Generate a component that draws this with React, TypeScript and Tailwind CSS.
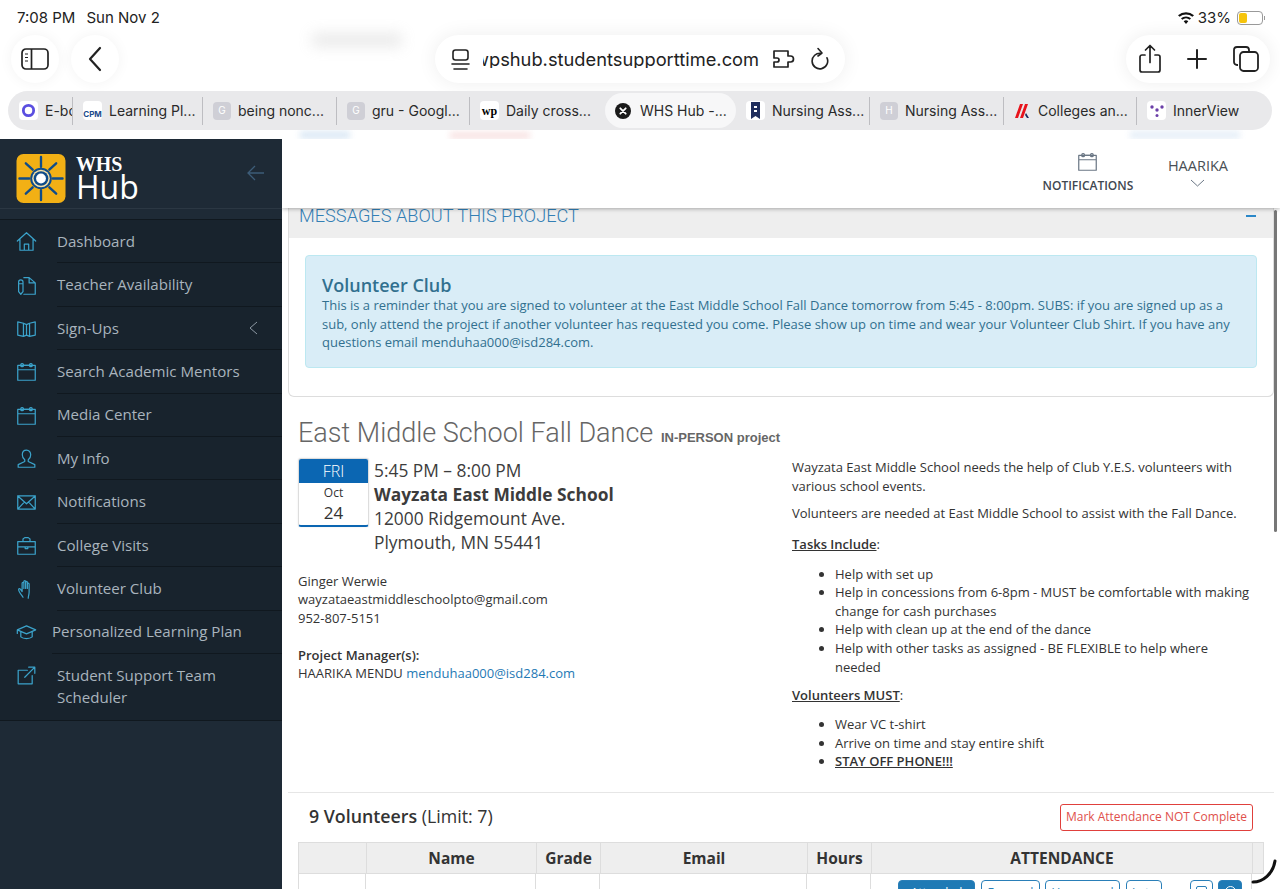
import React from "react";

const I = ({ children, size = 24, sw = 1.4, cls = "" }: { children: React.ReactNode; size?: number; sw?: number; cls?: string }) => (
  <svg width={size} height={size} viewBox="0 0 24 24" fill="none" stroke="currentColor" strokeWidth={sw} strokeLinecap="round" strokeLinejoin="round" className={cls}>{children}</svg>
);

const Cal = () => (<I size={21}><path d="M2 5h20v17H2zM2 10h20M2 5h20" /><rect x="5.5" y="3" width="3" height="3.5" rx="1.2" /><rect x="15.5" y="3" width="3" height="3.5" rx="1.2" /><path d="M8.5 5h7" /></I>);

const navIcons: Record<string, React.ReactNode> = {
  home: <I size={21}><path d="M1.5 11.5 12 2l10.5 9.5M4.5 9.5V22h15V9.5M9.5 22v-7h5v7" /></I>,
  doc: <I size={21}><path d="M9 3h6l7 6v13H9M15 3v6h7" /><path d="M3 8a2.5 2.500 0 0 1 5 0v11l-2.500 3L3 19zM3 10h5" /></I>,
  map: <I size={21}><path d="M2 4.500 8.500 6v15L2 19.500zM8.500 6 12 7.500 15.500 6 22 4.500v15L15.500 21 12 19.500 8.500 21M12 7.500v12M15.500 6v15" /></I>,
  cal: <Cal />,
  user: <I size={21}><path d="M12 2.500c-3 0-4.800 2.300-4.800 5.200 0 2.500 1 4.500 2.800 5.800v2L2.500 19v3h19v-3L14 15.500v-2c1.800-1.300 2.800-3.300 2.800-5.800 0-2.900-1.800-5.200-4.800-5.200Z" /></I>,
  mail: <I size={21}><path d="M2 4.500h20v15H2zM2 4.500l10 9 10-9M2 19.500l7.500-8M22 19.500l-7.500-8" /></I>,
  case: <I size={21}><path d="M2 7.500h20v14.500H2zM2 13.500h20M8 7.500V4.500L10 3h4l2 1.500v3M10.500 13.500v2h3v-2" /></I>,
  hand: <I size={21}><path d="M8 22c-2-3-5-6.500-5-9 0-1 1.300-1.200 2-.2l2 2.700V6c0-1.500 2-1.500 2 0v6-8c0-1.500 2-1.500 2 0v8-7c0-1.500 2-1.500 2 0v7-5c0-1.500 2-1.500 2 0v9c0 3-1 5-1 7" /></I>,
  grad: <I size={21}><path d="M1.500 9 12 4.500 22.500 9 12 13.500zM5.500 11.500V17c3 2.500 10 2.500 13 0v-5.500M1.500 9v4" /></I>,
  ext: <I size={21}><path d="M13 6H2.500v15.500h16V12M10 14 21.500 2.500M14.500 2.500h7v7" /></I>,
};

const nav: [string, string][] = [
  ["Dashboard", "home"],
  ["Teacher Availability", "doc"],
  ["Sign-Ups", "map"],
  ["Search Academic Mentors", "cal"],
  ["Media Center", "cal"],
  ["My Info", "user"],
  ["Notifications", "mail"],
  ["College Visits", "case"],
  ["Volunteer Club", "hand"],
];

const Fav = ({ f, plain }: { f: React.ReactNode; plain?: boolean }) =>
  typeof f === "string" ? (
    <span className="w-[18px] h-[18px] rounded-[4px] bg-[#cfcfd6] text-white text-[10px] flex items-center justify-center shrink-0">{f}</span>
  ) : (
    <span className={`${plain ? "w-[17px]" : "w-[19px] bg-white"} h-[19px] rounded-[4px] flex items-center justify-center shrink-0 overflow-hidden`}>{f}</span>
  );

const Tab = ({ f, t, w, last, plain }: { f: React.ReactNode; t: string; w: string; last?: boolean; plain?: boolean }) => (
  <div className={`${w} h-[28px] flex items-center gap-[7px] pl-[10px] overflow-hidden shrink-0 ${last ? "" : "border-r border-[#bdbdc1]"}`}>
    <Fav f={f} plain={plain} />
    <span className="whitespace-nowrap">{t}</span>
  </div>
);

const Chrome = () => (
  <div className="relative h-[139px] shrink-0 bg-white font-['Inter',sans-serif] text-[#222] overflow-hidden">
    <div className="absolute left-[312px] top-[33px] w-[90px] h-[14px] bg-[#bbbbbb] blur-[7px] opacity-30" />
    <div className="absolute left-[300px] top-[131px] w-[50px] h-[8px] bg-[#dce9f5] blur-[3px]" />
    <div className="absolute left-[450px] top-[132px] w-[80px] h-[7px] bg-[#f8e2e2] blur-[3px]" />
    <div className="absolute left-[1130px] top-[131px] w-[110px] h-[8px] bg-[#e6eff8] blur-[3px]" />

    <div className="relative h-[36px] pl-[17px] pr-[17px] flex items-center justify-between text-[15px]">
      <div className="flex gap-[11px]"><span>7:08 PM</span><span>Sun Nov 2</span></div>
      <div className="flex items-center gap-[4px]">
        <svg width="16" height="12" viewBox="0 0 16 12" fill="#111"><path d="M8 12 5.700 9.300a3.500 3.500 0 0 1 4.600 0zM4.300 7.800 3 6.300a7.600 7.600 0 0 1 10 0l-1.300 1.500a5.600 5.600 0 0 0-7.400 0zM1.600 4.800 0 3.200a12 12 0 0 1 16 0l-1.600 1.600a9.800 9.800 0 0 0-12.800 0z" /></svg>
        <span>33%</span>
        <div className="relative ml-[2px] w-[26px] h-[14px] rounded-[4px] border border-[#9a9a9a] p-[1px]">
          <div className="w-[8px] h-full rounded-[2px] bg-[#f6c40c]" />
          <div className="absolute right-[-3px] top-[4px] w-[1.500px] h-[4px] bg-[#9a9a9a]" />
        </div>
      </div>
    </div>

    <div className="relative h-[48px] -mt-[1px] flex items-center pl-[11px] pr-[10px]">
      <div className="flex gap-[12px]">
        <div className="w-[48px] h-[48px] rounded-full bg-white shadow-[0_0_14px_rgba(0,0,0,0.05)] flex items-center justify-center">
          <svg width="28" height="26" viewBox="0 0 28 26" fill="none" stroke="#222" strokeWidth="1.700"><rect x="1" y="3" width="26" height="20" rx="4" /><path d="M10.500 3v20" /><path d="M4 8h3M4 11.500h3M4 15h3" strokeWidth="1.200" /></svg>
        </div>
        <div className="w-[48px] h-[48px] rounded-full bg-white shadow-[0_0_14px_rgba(0,0,0,0.05)] flex items-center justify-center text-[#222]">
          <svg width="16" height="26" viewBox="0 0 16 26" fill="none" stroke="currentColor" strokeWidth="2.200" strokeLinecap="round" strokeLinejoin="round"><path d="M13 2 3 13l10 11" /></svg>
        </div>
      </div>
      <div className="ml-[316px] w-[410px] h-[48px] rounded-full bg-white shadow-[0_0_20px_rgba(0,0,0,0.07)] flex items-center pl-[16px] gap-[13px]">
        <svg width="19" height="26" viewBox="0 0 19 26" fill="none" stroke="#222" strokeWidth="1.600" strokeLinecap="round"><rect x="2" y="4" width="15" height="10" rx="2.500" /><path d="M1 18h17M3 23h13" /></svg>
        <div className="w-[277px] overflow-hidden whitespace-nowrap text-[18.300px] leading-none"><span className="ml-[-9px] inline-block">wpshub.studentsupporttime.com</span></div>
        <div className="flex items-center gap-[14px] -ml-[1px]">
          <svg width="24" height="20" viewBox="0 0 24 20" fill="none" stroke="#222" strokeWidth="1.700" strokeLinejoin="round"><path d="M2 2h14v5h2.500a3 3 0 0 1 0 6H16v5H2v-5h3a2 2 0 0 0 0-4H2z" /></svg>
          <svg width="19" height="24" viewBox="0 0 19 24" fill="none" stroke="#222" strokeWidth="1.600" strokeLinecap="round" strokeLinejoin="round"><path d="M11 6.300a7.800 7.800 0 1 0 6 4.500" /><path d="M8 1.500 12 6l-4 3" /></svg>
        </div>
      </div>
      <div className="ml-auto h-[48px] w-[144px] rounded-full bg-white shadow-[0_0_18px_rgba(0,0,0,0.07)] flex items-center pl-[13px] gap-[26px]">
        <svg width="22" height="30" viewBox="0 0 22 30" fill="none" stroke="#222" strokeWidth="1.700" strokeLinecap="round" strokeLinejoin="round"><path d="M11 18.500V2M6.500 6 11 1.500 15.500 6M6 11H3a2 2 0 0 0-2 2v13a2 2 0 0 0 2 2h16a2 2 0 0 0 2-2V13a2 2 0 0 0-2-2h-3" /></svg>
        <svg width="20" height="20" viewBox="0 0 20 20" stroke="#222" strokeWidth="2" strokeLinecap="round"><path d="M10 1v18M1 10h18" /></svg>
        <svg width="26" height="26" viewBox="0 0 26 26" fill="none" stroke="#222" strokeWidth="1.800"><path d="M5 19H4a3 3 0 0 1-3-3V4a3 3 0 0 1 3-3h9a3 3 0 0 1 3 3v2" /><rect x="7" y="6" width="18" height="19" rx="3.500" /></svg>
      </div>
    </div>

    <div className="relative mt-[8px] ml-[8px] w-[1264px] h-[39px] rounded-full bg-[#e9e9eb] flex items-center pl-[1px] text-[14px] text-[#2a2a2a]">
      <Tab w="w-[64px]" t="E-book" f={<svg width="15" height="15" viewBox="0 0 16 16" fill="none" stroke="#5a4ee0" strokeWidth="3"><circle cx="8" cy="8" r="5.500" /></svg>} />
      <Tab w="w-[130px]" t="Learning Pl..." f={<span className="text-[8px] font-bold leading-none text-[#1c4b8c] pt-1.5">CPM</span>} />
      <Tab w="w-[134px]" t="being nonc..." f="G" />
      <Tab w="w-[133px]" t="gru - Googl..." f="G" />
      <Tab w="w-[135px]" last t="Daily cross..." f={<span className="font-['Liberation_Serif',serif] text-[12px] font-bold text-black">wp</span>} />
      <div className="w-[131px] h-[35px] rounded-full bg-[#f7f7f8] flex items-center pl-[10px] gap-[9px] overflow-hidden shrink-0 whitespace-nowrap">
        <svg width="16" height="16" viewBox="0 0 16 16"><circle cx="8" cy="8" r="8" fill="#1a1a1a" /><path d="M5.300 5.300l5.400 5.400M10.700 5.300l-5.400 5.400" stroke="#fff" strokeWidth="1.800" strokeLinecap="round" /></svg>
        <span>WHS Hub -...</span>
      </div>
      <Tab w="w-[134px]" t="Nursing Ass..." f={<svg width="9" height="17" viewBox="0 0 9 17"><path d="M0 0h9v17L4.500 14 0 17z" fill="#1f2d5c" /><path d="M3 4h3v2H3zM3 8h3v2H3z" fill="#fff" /></svg>} />
      <Tab w="w-[134px]" t="Nursing Ass..." f="H" />
      <Tab w="w-[133px]" plain t="Colleges an..." f={<svg width="16" height="16" viewBox="0 0 16 16"><path d="M5 1h3L3 15H0zM10 1h3L8 15H5z" fill="#e8141c" /><path d="M11 10l3 5h-2l-2-3z" fill="#1f2d5c" /></svg>} />
      <div className="flex items-center gap-[7px] pl-[10px]">
        <Fav f={<svg width="14" height="12" viewBox="0 0 14 12" fill="#6b3fa8"><circle cx="2" cy="2" r="1.700" /><circle cx="12" cy="2" r="1.700" /><circle cx="7" cy="5" r="1.700" /><circle cx="7" cy="10.500" r="1.500" /></svg>} />
        <span>InnerView</span>
      </div>
    </div>
  </div>
);

const Row = ({ label, icon, extra }: { label: string; icon: string; extra?: React.ReactNode }) => (
  <div className="flex items-center h-[43.400px] pl-[16px]">
    <div className="w-[41px] shrink-0 text-[#3ba3cb] flex items-center">{navIcons[icon]}</div>
    <div className="flex-1 h-full flex items-center justify-between border-b border-[#10181f] pr-[24px]">
      <span>{label}</span>{extra}
    </div>
  </div>
);

const Sidebar = () => (
  <aside className="w-[282px] shrink-0 bg-[#1e2a36] font-['Open_Sans',sans-serif] text-[15.100px] text-[#a9b4bd] flex flex-col">
    <div className="h-[70px] flex items-start pt-[15px] pl-[16px] pr-[17px] border-b border-[#2b3743] shrink-0">
      <svg width="50" height="49" viewBox="0 0 50 50" className="shrink-0">
        <rect width="50" height="50" rx="7" fill="#f2b015" />
        <g stroke="#0f4c8a" strokeWidth="2.400" strokeLinecap="round">
          <path d="M25 3v10M25 37v10M3 25h10M37 25h10M9.500 9.500l7 6.500M33.500 34l7 6.500M40.500 9.500l-7 6.500M16.500 34l-7 6.500" />
        </g>
        <circle cx="25" cy="25" r="11" fill="#0f4c8a" />
        <circle cx="25" cy="25" r="9" fill="#f7e2a8" />
        <circle cx="25" cy="25" r="7.500" fill="#0f4c8a" />
        <circle cx="25" cy="25" r="5" fill="#fff" />
      </svg>
      <div className="ml-[10px] flex flex-col text-white">
        <span className="font-['Liberation_Serif',serif] font-bold text-[20px] leading-[20px] tracking-[-0.2px]">WHS</span>
        <span className="font-['Open_Sans',sans-serif] text-[32px] leading-[26px] font-medium">Hub</span>
      </div>
      <div className="ml-auto text-[#3d5c78] mt-[10px]">
        <svg width="18" height="18" viewBox="0 0 18 18" fill="none" stroke="currentColor" strokeWidth="1.300"><path d="M17 9H1M8 2 1 9l7 7" /></svg>
      </div>
    </div>
    <div className="h-[10px] shrink-0" />
    <nav className="bg-[#18232d] border-y border-[#10181f] shrink-0">
      {nav.map(([l, i]) => (
        <Row key={l} label={l} icon={i} extra={l === "Sign-Ups" ? <svg width="9" height="14" viewBox="0 0 9 14" fill="none" stroke="#8d99a3" strokeWidth="1"><path d="M8 1 1 7l7 6" /></svg> : undefined} />
      ))}
      <div className="flex items-center h-[43.400px] pl-[16px]">
        <div className="w-[36px] shrink-0 text-[#3ba3cb] flex items-center">{navIcons.grad}</div>
        <div className="flex-1 h-full flex items-center border-b border-[#10181f]">Personalized Learning Plan</div>
      </div>
      <div className="flex pl-[16px] pt-[10px] h-[66px]">
        <div className="w-[41px] shrink-0 text-[#3ba3cb] pt-[1px]">{navIcons.ext}</div>
        <div className="leading-[22px]">Student Support Team<br />Scheduler</div>
      </div>
    </nav>
  </aside>
);

const Btn = ({ w, solid, children }: { w: string; solid?: boolean; children?: React.ReactNode }) => (
  <div className={`${w} h-[28px] rounded-[4px] border border-[#2a7fb8] text-[12px] text-center pt-[3px] shrink-0 ${solid ? "bg-[#1f7ab5] text-white" : "bg-white text-[#2a7fb8]"}`}>{children}</div>
);

const Main = () => (
  <main className="relative flex-1 min-w-0 h-[750px] overflow-hidden font-['Open_Sans',sans-serif] text-[13px] leading-[18.570px] text-[#333] bg-white">
    <header className="relative z-10 h-[69px] bg-white shadow-[0_1px_4px_rgba(0,0,0,0.3)] flex justify-end pr-[52px] text-[#444]">
      <div className="flex flex-col items-center pt-[12px] w-[90px] mr-[35px]">
        <span className="text-[#6b7785]"><Cal /></span>
        <span className="text-[12px] font-semibold mt-[5px] text-[#3f4750]">NOTIFICATIONS</span>
      </div>
      <div className="flex flex-col items-center pt-[17px]">
        <span className="text-[14.500px] leading-[20px] text-[#4a4f55]">HAARIKA</span>
        <svg className="mt-[3px]" width="15" height="8" viewBox="0 0 15 8" fill="none" stroke="#6b7785" strokeWidth="1"><path d="M1 1l6.500 6L14 1" /></svg>
      </div>
    </header>

    <section className="ml-[6px] w-[986px] h-[189px] border border-[#ddd] border-t-0 rounded-b-[6px]">
      <div className="h-[30px] bg-[#eeeeee] flex items-center justify-between pl-[10px] pr-[17px] pb-[13px] font-['Roboto',sans-serif] font-light text-[18.200px] text-[#337fb5]">
        <span>MESSAGES ABOUT THIS PROJECT</span>
        <span className="w-[10px] h-[2px] bg-[#2a87c8] -mt-[2px]" />
      </div>
      <div className="mx-[16px] mt-[17px] h-[113px] rounded-[4px] border border-[#bce8f1] bg-[#d9edf7] text-[#31708f] px-[16px] pt-[18.500px]">
        <h3 className="text-[18px] font-semibold leading-[20px]">Volunteer Club</h3>
        <p className="mt-[1.500px]">This is a reminder that you are signed to volunteer at the East Middle School Fall Dance tomorrow from 5:45 - 8:00pm. SUBS: if you are signed up as a sub, only attend the project if another volunteer has requested you come. Please show up on time and wear your Volunteer Club Shirt. If you have any questions email menduhaa000@isd284.com.</p>
      </div>
    </section>

    <h1 className="ml-[16px] mt-[20px] h-[33px] font-['Roboto',sans-serif] font-light text-[27px] leading-[33px] text-[#666] whitespace-nowrap">
      East Middle School Fall Dance <small className="text-[13px] font-bold font-['Liberation_Sans',sans-serif] text-[#666] ml-[1px]">IN-PERSON project</small>
    </h1>

    <div className="flex mt-[9px] ml-[16px]">
      <div className="w-[494px] shrink-0">
        <div className="flex gap-[5px] h-[96px]">
          <div className="w-[71px] h-[69px] mt-[-1px] rounded-[3px] border border-[#ddd] border-b-[2px] border-b-[#0b66b2] overflow-hidden text-center shrink-0 shadow-[0_0_2px_rgba(0,0,0,0.1)]">
            <div className="bg-[#0b66b2] text-white text-[16px] leading-[24px] font-light">FRI</div>
            <div className="text-[12px] leading-[20px]">Oct</div>
            <div className="text-[17px] leading-[20px]">24</div>
          </div>
          <div className="text-[17.350px] leading-[24px] -mt-[1px] text-[#3c3c3c]">
            <div>5:45 PM – 8:00 PM</div>
            <div className="font-bold">Wayzata East Middle School</div>
            <div>12000 Ridgemount Ave.</div>
            <div>Plymouth, MN 55441</div>
          </div>
        </div>
        <div className="mt-[16.500px]">Ginger Werwie<br />wayzataeastmiddleschoolpto@gmail.com<br />952-807-5151</div>
        <div className="mt-[18.500px]"><b className="font-semibold">Project Manager(s):</b><br />HAARIKA MENDU <span className="text-[#1f7ab5]">menduhaa000@isd284.com</span></div>
      </div>
      <div className="w-[462px] shrink-0 -mt-[1px]">
        <p>Wayzata East Middle School needs the help of Club Y.E.S. volunteers with various school events.</p>
        <p className="mt-[9px]">Volunteers are needed at East Middle School to assist with the Fall Dance.</p>
        <p className="mt-[12px]"><b className="font-semibold underline">Tasks Include</b>:</p>
        <ul className="list-disc pl-[43px] mt-[11.500px]">
          <li>Help with set up</li>
          <li>Help in concessions from 6-8pm - MUST be comfortable with making change for cash purchases</li>
          <li>Help with clean up at the end of the dance</li>
          <li>Help with other tasks as assigned - BE FLEXIBLE to help where needed</li>
        </ul>
        <p className="mt-[9.500px]"><b className="font-semibold underline">Volunteers MUST</b>:</p>
        <ul className="list-disc pl-[43px] mt-[11px]">
          <li>Wear VC t-shirt</li>
          <li>Arrive on time and stay entire shift</li>
          <li className="font-semibold underline">STAY OFF PHONE!!!</li>
        </ul>
      </div>
    </div>

    <div className="absolute left-[6px] top-[653px] w-[986px]">
      <div className="border-t border-[#e6e6e6] flex items-center justify-between pl-[21px] pr-[21px] h-[50px]">
        <div className="text-[17.800px] -mt-[2px]"><b className="font-semibold">9 Volunteers</b> (Limit: 7)</div>
        <div className="w-[193px] h-[27px] rounded-[3px] border border-[#e0403c] text-[#e0504c] text-[12px] flex items-center justify-center">Mark Attendance NOT Complete</div>
      </div>
      <div className="ml-[10px] w-[966px] text-[15.500px] font-bold text-[#333]">
        <div className="grid grid-cols-[68px_170px_64px_207px_64px_381px_12px] h-[32px] bg-[#eeeeee] border border-[#dddddd] text-center items-center">
          <div className="h-full border-r border-[#ddd]" />
          <div className="h-full border-r border-[#ddd] flex items-center justify-center">Name</div>
          <div className="h-full border-r border-[#ddd] flex items-center justify-center">Grade</div>
          <div className="h-full border-r border-[#ddd] flex items-center justify-center">Email</div>
          <div className="h-full border-r border-[#ddd] flex items-center justify-center">Hours</div>
          <div className="h-full border-r border-[#ddd] flex items-center justify-center">ATTENDANCE</div>
          <div />
        </div>
        <div className="grid grid-cols-[68px_170px_64px_207px_64px_381px_12px] h-[20px] font-normal">
          <div className="h-full border-x border-[#ddd]" />
          <div className="h-full border-r border-[#ddd]" />
          <div className="h-full border-r border-[#ddd]" />
          <div className="h-full border-r border-[#ddd]" />
          <div className="h-full border-r border-[#ddd]" />
          <div className="h-full border-r border-[#ddd] flex pl-[27px] pt-[6px]">
            <Btn w="w-[77px]" solid>Attended</Btn>
            <div className="w-[6px]" />
            <Btn w="w-[59px]">Excused</Btn>
            <div className="w-[5px]" />
            <Btn w="w-[75px]">Unexcused</Btn>
            <div className="w-[6px]" />
            <Btn w="w-[36px]">Late</Btn>
            <div className="w-[28px]" />
            <Btn w="w-[23px]"><span className="inline-block w-[11px] h-[11px] mt-[1px] border border-[#2a7fb8] rounded-[2px]" /></Btn>
            <div className="w-[5px]" />
            <Btn w="w-[24px]" solid><span className="inline-block w-[11px] h-[11px] mt-[1px] border border-white rounded-full" /></Btn>
          </div>
        </div>
      </div>
    </div>

    <div className="absolute right-[3px] top-[71px] w-[3px] h-[322px] rounded-full bg-[#777777]" />
    <svg className="absolute right-[3px] bottom-[3px]" width="28" height="28" viewBox="0 0 28 28" fill="none" stroke="#111" strokeWidth="3" strokeLinecap="round"><path d="M4 24C14 24 24 16 26 3" /></svg>
  </main>
);

export default function App() {
  return (
    <div className="w-[1280px] h-[889px] overflow-hidden bg-white flex flex-col">
      <Chrome />
      <div className="flex flex-1 min-h-0">
        <Sidebar />
        <Main />
      </div>
    </div>
  );
}
